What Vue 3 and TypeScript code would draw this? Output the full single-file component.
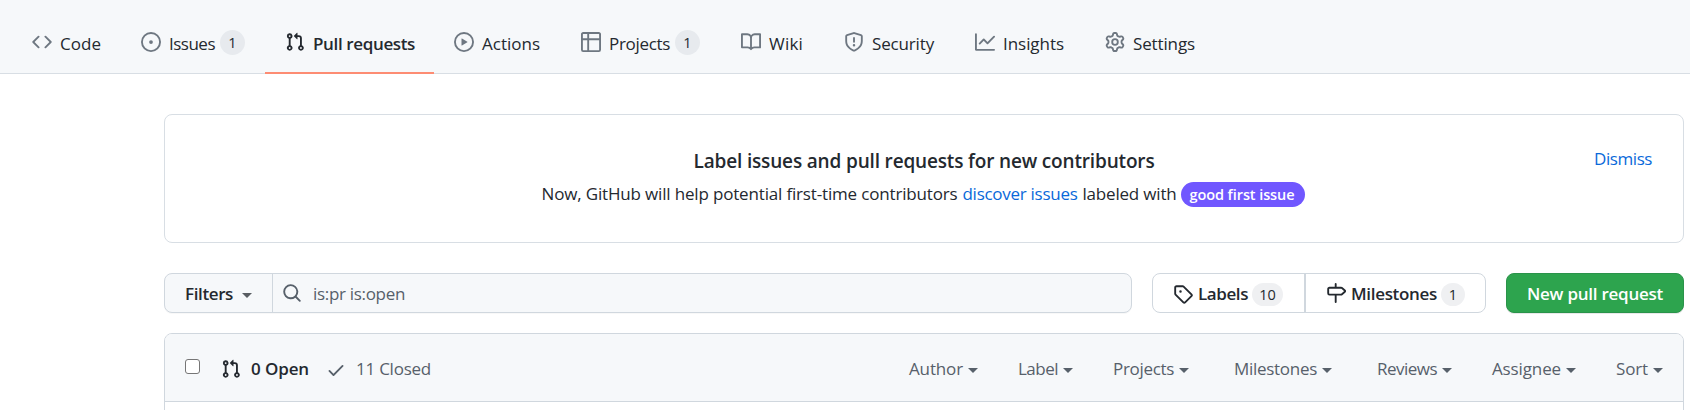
<script setup lang="ts">
interface Tab {
  label: string
  icon: string
  width: number
  text: number
  count?: number
  active?: boolean
}

const icons: Record<string, string> = {
  code: 'M4.72 3.22a.75.75 0 0 1 1.06 1.06L2.06 8l3.72 3.72a.75.75 0 1 1-1.06 1.06L.47 8.53a.75.75 0 0 1 0-1.06l4.25-4.25Zm6.56 0a.75.75 0 1 0-1.06 1.06L13.94 8l-3.72 3.72a.75.75 0 1 0 1.06 1.06l4.25-4.25a.75.75 0 0 0 0-1.06l-4.25-4.25Z',
  issue: 'M8 9.5a1.5 1.5 0 1 0 0-3 1.5 1.5 0 0 0 0 3ZM8 0a8 8 0 1 1 0 16A8 8 0 0 1 8 0ZM1.5 8a6.5 6.5 0 1 0 13 0 6.5 6.5 0 0 0-13 0Z',
  pull: 'M7.177 3.073 9.573.677A.25.25 0 0 1 10 .854v4.792a.25.25 0 0 1-.427.177L7.177 3.427a.25.25 0 0 1 0-.354ZM3.75 2.5a.75.75 0 1 0 0 1.5.75.75 0 0 0 0-1.5Zm-2.25.75a2.25 2.25 0 1 1 3 2.122v5.256a2.251 2.251 0 1 1-1.5 0V5.372A2.25 2.25 0 0 1 1.5 3.25ZM11 2.5h-1V4h1a1 1 0 0 1 1 1v5.628a2.251 2.251 0 1 0 1.5 0V5A2.5 2.5 0 0 0 11 2.5Zm1 10.25a.75.75 0 1 1 1.5 0 .75.75 0 0 1-1.5 0ZM3.75 12a.75.75 0 1 0 0 1.5.75.75 0 0 0 0-1.5Z',
  play: 'M1.5 8a6.5 6.5 0 1 1 13 0 6.5 6.5 0 0 1-13 0ZM8 0a8 8 0 1 0 0 16A8 8 0 0 0 8 0ZM6.379 5.227A.25.25 0 0 0 6 5.442v5.117a.25.25 0 0 0 .379.214l4.264-2.559a.25.25 0 0 0 0-.428L6.379 5.227Z',
  table: 'M0 1.75C0 .784.784 0 1.75 0h12.5C15.216 0 16 .784 16 1.75v12.5A1.75 1.75 0 0 1 14.25 16H1.75A1.75 1.75 0 0 1 0 14.25V1.75ZM6.5 6.5v8h7.75a.25.25 0 0 0 .25-.25V6.5h-8Zm8-1.5V1.75a.25.25 0 0 0-.25-.25H6.5V5h8ZM5 5V1.5H1.75a.25.25 0 0 0-.25.25V5H5ZM1.5 6.5v7.75c0 .138.112.25.25.25H5v-8H1.5Z',
  book: 'M0 1.75A.75.75 0 0 1 .75 1h4.253c1.227 0 2.317.59 3 1.501A3.743 3.743 0 0 1 11.006 1h4.245a.75.75 0 0 1 .75.75v10.5a.75.75 0 0 1-.75.75h-4.507a2.25 2.25 0 0 0-1.591.659l-.622.621a.75.75 0 0 1-1.06 0l-.622-.621A2.25 2.25 0 0 0 5.258 13H.75a.75.75 0 0 1-.75-.75V1.75Zm7.251 10.324.004-5.073-.002-2.253A2.25 2.25 0 0 0 5.003 2.5H1.5v9h3.757a3.75 3.75 0 0 1 1.994.574ZM8.755 4.75l-.004 7.322a3.752 3.752 0 0 1 1.992-.572H14.5v-9h-3.495a2.25 2.25 0 0 0-2.25 2.25Z',
  shield: 'M7.467.133a1.75 1.75 0 0 1 1.066 0l5.25 1.68A1.75 1.75 0 0 1 15 3.48V7c0 1.566-.32 3.182-1.303 4.682-.983 1.498-2.585 2.813-5.032 3.855a1.7 1.7 0 0 1-1.33 0c-2.447-1.042-4.049-2.357-5.032-3.855C1.32 10.182 1 8.566 1 7V3.48a1.75 1.75 0 0 1 1.217-1.667l5.25-1.68Zm.61 1.429a.25.25 0 0 0-.153 0l-5.25 1.68a.25.25 0 0 0-.174.238V7c0 1.358.275 2.666 1.057 3.86.784 1.194 2.121 2.34 4.366 3.297a.196.196 0 0 0 .154 0c2.245-.956 3.582-2.104 4.366-3.298C13.225 9.666 13.5 8.358 13.5 7V3.48a.25.25 0 0 0-.174-.237l-5.25-1.68ZM9 10.5a1 1 0 1 1-2 0 1 1 0 0 1 2 0Zm-.25-5.75v3a.75.75 0 0 1-1.5 0v-3a.75.75 0 0 1 1.5 0Z',
  graph: 'M1.5 1.75a.75.75 0 0 0-1.5 0v12.5c0 .414.336.75.75.75h14.5a.75.75 0 0 0 0-1.5H1.5V1.75Zm14.28 2.53a.75.75 0 0 0-1.06-1.06L10 7.94 7.53 5.47a.75.75 0 0 0-1.06 0L3.22 8.72a.75.75 0 0 0 1.06 1.06L7 7.06l2.47 2.47a.75.75 0 0 0 1.06 0l5.25-5.25Z',
  gear: 'M8 0a8.2 8.2 0 0 1 .701.031C9.444.095 9.99.645 10.16 1.29l.288 1.107c.018.066.079.158.212.224.231.114.454.243.668.386.123.082.233.09.299.071l1.103-.303c.644-.176 1.392.021 1.82.63.27.385.506.792.704 1.218.315.675.111 1.422-.364 1.891l-.814.806c-.049.048-.098.147-.088.294.016.257.016.515 0 .772-.01.147.038.246.088.294l.814.806c.475.469.679 1.216.364 1.891a7.977 7.977 0 0 1-.704 1.217c-.428.61-1.176.807-1.82.63l-1.102-.302c-.067-.019-.177-.011-.3.071a5.909 5.909 0 0 1-.668.386c-.133.066-.194.158-.211.224l-.29 1.106c-.168.646-.715 1.196-1.458 1.26a8.006 8.006 0 0 1-1.402 0c-.743-.064-1.289-.614-1.458-1.26l-.289-1.106c-.018-.066-.079-.158-.212-.224a5.738 5.738 0 0 1-.668-.386c-.123-.082-.233-.09-.299-.071l-1.103.303c-.644.176-1.392-.021-1.82-.63a8.12 8.12 0 0 1-.704-1.218c-.315-.675-.111-1.422.363-1.891l.815-.806c.05-.048.098-.147.088-.294a6.214 6.214 0 0 1 0-.772c.01-.147-.038-.246-.088-.294l-.815-.806C.635 6.045.431 5.298.746 4.623a7.92 7.92 0 0 1 .704-1.217c.428-.61 1.176-.807 1.82-.63l1.102.302c.067.019.177.011.3-.071.214-.143.437-.272.668-.386.133-.066.194-.158.211-.224l.29-1.106C6.009.645 6.556.095 7.299.03 7.53.01 7.764 0 8 0Zm-.571 1.525c-.036.003-.108.036-.137.146l-.289 1.105c-.147.561-.549.967-.998 1.189-.173.086-.34.183-.5.29-.417.278-.97.423-1.529.27l-1.103-.303c-.109-.03-.175.016-.195.045-.22.312-.412.644-.573.99-.014.031-.021.11.059.19l.815.806c.411.406.562.957.53 1.456a4.709 4.709 0 0 0 0 .582c.032.499-.119 1.05-.53 1.456l-.815.806c-.081.08-.073.159-.059.19.162.346.353.677.573.989.02.03.085.076.195.046l1.102-.303c.56-.153 1.113-.008 1.53.27.161.107.328.204.501.29.447.222.85.629.997 1.189l.289 1.105c.029.109.101.143.137.146a6.6 6.6 0 0 0 1.142 0c.036-.003.108-.036.137-.146l.289-1.105c.147-.561.549-.967.998-1.189.173-.086.34-.183.5-.29.417-.278.97-.423 1.529-.27l1.103.303c.109.029.175-.016.195-.045.22-.313.411-.644.573-.99.014-.031.021-.11-.059-.19l-.815-.806c-.411-.406-.562-.957-.53-1.456a4.709 4.709 0 0 0 0-.582c-.032-.499.119-1.05.53-1.456l.815-.806c.081-.08.073-.159.059-.19a6.464 6.464 0 0 0-.573-.989c-.02-.03-.085-.076-.195-.046l-1.102.303c-.56.153-1.113.008-1.53-.27a4.44 4.44 0 0 0-.501-.29c-.447-.222-.85-.629-.997-1.189l-.289-1.105c-.029-.11-.101-.143-.137-.146a6.6 6.6 0 0 0-1.142 0ZM11 8a3 3 0 1 1-6 0 3 3 0 0 1 6 0ZM9.5 8a1.5 1.5 0 1 0-3.001.001A1.5 1.5 0 0 0 9.5 8Z',
  search: 'M10.68 11.74a6 6 0 0 1-7.922-8.982 6 6 0 0 1 8.982 7.922l3.04 3.04a.749.749 0 1 1-1.06 1.06l-3.04-3.04ZM11.5 7a4.499 4.499 0 1 0-8.997 0A4.499 4.499 0 0 0 11.5 7Z',
  tag: 'M1 7.775V2.75C1 1.784 1.784 1 2.75 1h5.025c.464 0 .91.184 1.238.513l6.25 6.25a1.75 1.75 0 0 1 0 2.474l-5.026 5.026a1.75 1.75 0 0 1-2.474 0l-6.25-6.25A1.752 1.752 0 0 1 1 7.775Zm1.5 0c0 .066.026.13.073.177l6.25 6.25a.25.25 0 0 0 .354 0l5.025-5.025a.25.25 0 0 0 0-.354l-6.25-6.25a.25.25 0 0 0-.177-.073H2.75a.25.25 0 0 0-.25.25ZM6 5a1 1 0 1 1 0 2 1 1 0 0 1 0-2Z',
  milestone: 'M7.75 0a.75.75 0 0 1 .75.75V3h3.634c.414 0 .814.147 1.13.414l2.07 1.75a1.75 1.75 0 0 1 0 2.672l-2.07 1.75a1.75 1.75 0 0 1-1.13.414H8.5v5.25a.75.75 0 0 1-1.5 0V10H2.75A1.75 1.75 0 0 1 1 8.25v-3.5C1 3.784 1.784 3 2.75 3H7V.75A.75.75 0 0 1 7.75 0Zm4.384 8.5a.25.25 0 0 0 .161-.06l2.07-1.75a.248.248 0 0 0 0-.38l-2.07-1.75a.25.25 0 0 0-.161-.06H2.75a.25.25 0 0 0-.25.25v3.5c0 .138.112.25.25.25h9.384Z',
  check: 'M13.78 4.22a.75.75 0 0 1 0 1.06l-7.25 7.25a.75.75 0 0 1-1.06 0L2.22 9.28a.75.75 0 0 1 1.06-1.06L6 10.94l6.72-6.72a.75.75 0 0 1 1.06 0Z',
}

const tabs: Tab[] = [
  { label: 'Code', icon: 'code', width: 109, text: 41 },
  { label: 'Issues', icon: 'issue', width: 144, text: 46, count: 1 },
  { label: 'Pull requests', icon: 'pull', width: 169, text: 102, active: true },
  { label: 'Actions', icon: 'play', width: 127, text: 58 },
  { label: 'Projects', icon: 'table', width: 160, text: 61, count: 1 },
  { label: 'Wiki', icon: 'book', width: 103, text: 34 },
  { label: 'Security', icon: 'shield', width: 131, text: 62 },
  { label: 'Insights', icon: 'graph', width: 130, text: 61 },
  { label: 'Settings', icon: 'gear', width: 131, text: 62 },
]

const menus = [
  { label: 'Author', width: 54 },
  { label: 'Label', width: 40 },
  { label: 'Projects', width: 61 },
  { label: 'Milestones', width: 83, wide: true },
  { label: 'Reviews', width: 60 },
  { label: 'Assignee', width: 69 },
  { label: 'Sort', width: 32 },
]

// Tracks the text so that it fills the given width exactly.
const vFit = {
  mounted(el: HTMLElement, binding: { value: number }) {
    const natural = el.getBoundingClientRect().width
    const letters = (el.textContent ?? '').length
    el.style.letterSpacing = `${(binding.value - natural) / letters}px`
  },
}
</script>

<template>
  <div class="page">
    <nav class="tabs">
      <a
        v-for="tab in tabs"
        :key="tab.label"
        class="tab"
        :class="{ active: tab.active }"
        :style="{ width: tab.width + 'px' }"
      >
        <svg class="icon" viewBox="0 0 16 16"><path :d="icons[tab.icon]" /></svg>
        <span v-fit="tab.text" class="t">{{ tab.label }}</span>
        <span v-if="tab.count" class="count">{{ tab.count }}</span>
      </a>
    </nav>

    <main class="content">
      <section class="notice">
        <a class="dismiss"><span v-fit="58" class="t">Dismiss</span></a>
        <h3><span v-fit="461" class="t">Label issues and pull requests for new contributors</span></h3>
        <p>
          <span v-fit="416" class="t">Now, GitHub will help potential first-time contributors</span>
          <a v-fit="115" class="t link">discover issues</a>
          <span v-fit="94" class="t">labeled with</span>
          <span class="pill"><span v-fit="105" class="t">good first issue</span></span>
        </p>
      </section>

      <div class="toolbar">
        <div class="search">
          <button class="filters" type="button"><span v-fit="48" class="t">Filters</span><i class="caret"></i></button>
          <div class="query">
            <svg class="icon" viewBox="0 0 16 16"><path :d="icons.search" /></svg>
            <span v-fit="92" class="t">is:pr is:open</span>
          </div>
        </div>
        <div class="subnav">
          <a class="labels">
            <svg class="icon" viewBox="0 0 16 16"><path :d="icons.tag" /></svg>
            <span v-fit="50" class="t">Labels</span><span class="count wide">10</span>
          </a>
          <a class="milestones">
            <svg class="icon" viewBox="0 0 16 16"><path :d="icons.milestone" /></svg>
            <span v-fit="86" class="t">Milestones</span><span class="count">1</span>
          </a>
        </div>
        <button class="new" type="button"><span v-fit="136" class="t">New pull request</span></button>
      </div>

      <section class="list">
        <header>
          <span class="box"></span>
          <a class="state open">
            <svg class="icon" viewBox="0 0 16 16"><path :d="icons.pull" /></svg>
            <span v-fit="58" class="t">0 Open</span>
          </a>
          <a class="state closed">
            <svg class="icon" viewBox="0 0 16 16"><path :d="icons.check" /></svg>
            <span v-fit="75" class="t">11 Closed</span>
          </a>
          <div class="menus">
            <a v-for="menu in menus" :key="menu.label" class="menu" :class="{ wide: menu.wide }">
              <span v-fit="menu.width" class="t">{{ menu.label }}</span><i class="caret"></i>
            </a>
          </div>
        </header>
      </section>
    </main>
  </div>
</template>

<style>
html,
body {
  margin: 0;
  overflow: hidden;
  background: #fff;
}
</style>

<style scoped>
.page,
.page * {
  box-sizing: border-box;
}
.page {
  height: 410px;
  overflow: hidden;
  font: 400 17px/26px 'Open Sans', 'Noto Sans', sans-serif;
  color: #24292f;
}
.t {
  display: inline-block;
  flex: none;
  white-space: nowrap;
}
.icon {
  display: block;
  flex: none;
  width: 20px;
  height: 20px;
  fill: currentColor;
}
.tabs {
  display: flex;
  height: 74px;
  padding-left: 12px;
  background: #f6f8fa;
  border-bottom: 1px solid #d8dee4;
}
.tab {
  display: flex;
  align-items: flex-start;
  flex: none;
  height: 74px;
  padding: 30px 0 0 20px;
}
.tab .icon {
  margin: 2px 8px 0 0;
  color: #6e7781;
}
.tab .t {
  margin-top: 1px;
}
.tab.active {
  font-weight: 600;
  border-bottom: 2px solid #fd8c73;
}
.tab.active .icon {
  color: #24292f;
}
.count {
  flex: none;
  width: 25px;
  height: 25px;
  margin-left: 5px;
  border-radius: 13px;
  background: #e7eaee;
  font-size: 14.5px;
  font-weight: 500;
  line-height: 25px;
  text-align: center;
}
.content {
  width: 1520px;
  margin: 40px 0 0 164px;
}
.notice {
  position: relative;
  height: 129px;
  padding-top: 31px;
  border: 1px solid #d8dee4;
  border-radius: 8px;
  text-align: center;
}
.dismiss {
  position: absolute;
  top: 31px;
  right: 31px;
  color: #0969da;
}
h3 {
  margin: 0;
  font-size: 19px;
  font-weight: 600;
  line-height: 30px;
}
p {
  display: flex;
  justify-content: center;
  margin: 5px 2px 0 0;
}
p .link {
  margin: 0 5px;
  color: #0969da;
}
.pill {
  height: 25px;
  margin: 1px 0 0 4px;
  padding: 0 10px 0 9px;
  border-radius: 13px;
  background: #7057ff;
  color: #fff;
  font-size: 14.5px;
  font-weight: 600;
  line-height: 25px;
}
.toolbar {
  display: flex;
  height: 40px;
  margin-top: 30px;
}
.toolbar .t {
  margin-top: 1px;
}
button {
  padding: 0;
  font: inherit;
  color: inherit;
}
.search {
  display: flex;
  width: 968px;
  border: 1px solid #d0d7de;
  border-radius: 8px;
  background: #f6f8fa;
  box-shadow: 0 1px 0 rgba(27, 31, 36, 0.03);
}
.filters {
  display: flex;
  align-items: center;
  width: 108px;
  padding-left: 20px;
  border: 0;
  border-right: 1px solid #d0d7de;
  background: none;
  font-weight: 600;
}
.caret {
  flex: none;
  width: 0;
  height: 0;
  border: 5px solid transparent;
  border-top-color: currentColor;
  border-bottom: 0;
}
.filters .caret {
  margin: 4px 0 0 9px;
  opacity: 0.75;
}
.query {
  display: flex;
  align-items: center;
  padding-left: 9px;
  color: #57606a;
}
.query .icon {
  margin-right: 11px;
}
.subnav {
  display: flex;
  width: 334px;
  margin-left: 20px;
  border: 1px solid #d0d7de;
  border-radius: 8px;
  font-weight: 600;
}
.subnav a {
  display: flex;
  align-items: center;
  padding-left: 20px;
}
.labels {
  width: 153px;
  border-right: 2px solid #d0d7de;
}
.subnav .icon {
  margin: 2px 5px 0 0;
}
.milestones .icon {
  margin-top: 0;
}
.subnav .count {
  width: 24px;
  height: 23px;
  margin: 2px 0 0 4px;
  background: #eff0f2;
  line-height: 23px;
}
.subnav .count.wide {
  width: 31px;
}
.new {
  width: 178px;
  margin-left: 20px;
  padding-top: 1px;
  border: 1px solid #2a934a;
  border-radius: 8px;
  background: #2da44e;
  box-shadow: 0 1px 0 rgba(27, 31, 36, 0.1);
  color: #fff;
  font-weight: 600;
}
.list {
  height: 100px;
  margin-top: 20px;
  border: 1px solid #d0d7de;
  border-radius: 8px 8px 0 0;
}
header {
  display: flex;
  align-items: center;
  height: 68px;
  padding: 2px 20px 0;
  border-bottom: 1px solid #d0d7de;
  border-radius: 7px 7px 0 0;
  background: #f6f8fa;
}
.box {
  width: 15px;
  height: 15px;
  margin-top: -5px;
  border: 1px solid #767676;
  border-radius: 3px;
  background: #fff;
}
.state {
  display: flex;
  align-items: center;
}
.open {
  margin-left: 20px;
  font-weight: 600;
}
.open .icon {
  margin: 0 10px 0 1px;
}
.closed {
  margin-left: 17px;
  color: #57606a;
}
.closed .icon {
  margin: 2px 10px 0 0;
}
.menus {
  display: flex;
  gap: 40px;
  margin-left: auto;
  color: #57606a;
}
.menu {
  display: flex;
  align-items: center;
}
.menu.wide {
  margin: 0 5px;
}
.menu .caret {
  margin: 3px 0 0 5px;
}
</style>
